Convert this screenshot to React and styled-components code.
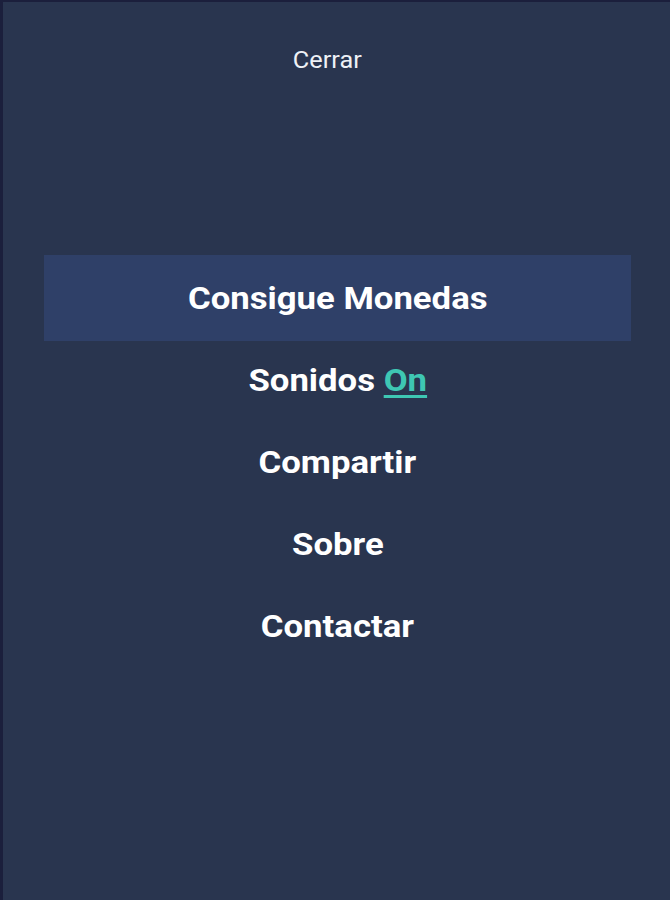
import React from "react";
import styled, { createGlobalStyle } from "styled-components";

const GlobalStyle = createGlobalStyle`
  html, body {
    margin: 0;
    padding: 0;
    background: #29354f;
  }
  body {
    font-family: Roboto, "Liberation Sans", sans-serif;
  }
`;

const items = [
  { label: "Consigue Monedas", active: true },
  { label: "Sonidos", toggle: "On" },
  { label: "Compartir" },
  { label: "Sobre" },
  { label: "Contactar" },
];

export default function App() {
  return (
    <>
      <GlobalStyle />
      <Screen>
        <Header>
          <CloseButton>Cerrar</CloseButton>
        </Header>
        <Menu>
          {items.map((item) => (
            <MenuItem key={item.label} $active={item.active}>
              <Label>
                {item.label}
                {item.toggle && (
                  <>
                    {" "}
                    <Toggle>{item.toggle}</Toggle>
                  </>
                )}
              </Label>
            </MenuItem>
          ))}
        </Menu>
      </Screen>
    </>
  );
}

const Screen = styled.div`
  box-sizing: border-box;
  width: 670px;
  height: 900px;
  background: #29354f;
  border-left: 3px solid #1b1f3c;
  border-top: 2px solid #1b1f3c;
  padding-left: 3px;
  display: flex;
  flex-direction: column;
`;

const Header = styled.div`
  height: 116px;
  display: flex;
  align-items: center;
  justify-content: center;
  padding-right: 22px;
`;

const CloseButton = styled.span`
  display: inline-block;
  color: #eef1f6;
  font-size: 23px;
  font-weight: 400;
  transform: scaleX(1.1);
`;

const Menu = styled.div`
  margin-top: 139px;
  display: flex;
  flex-direction: column;
  padding: 0 39px 0 38px;
`;

const MenuItem = styled.div`
  height: ${(p) => (p.$active ? "86px" : "82px")};
  margin: ${(p) => (p.$active ? "-2px 0" : "0")};
  display: flex;
  align-items: center;
  justify-content: center;
  background: ${(p) => (p.$active ? "#2f4068" : "transparent")};
`;

const Label = styled.span`
  display: inline-block;
  white-space: pre;
  color: #ffffff;
  font-size: 31px;
  font-weight: 700;
  transform: scaleX(1.12);
`;

const Toggle = styled.span`
  color: #3ec7b3;
  text-decoration: underline;
  text-underline-offset: 4px;
  text-decoration-thickness: 3px;
`;
